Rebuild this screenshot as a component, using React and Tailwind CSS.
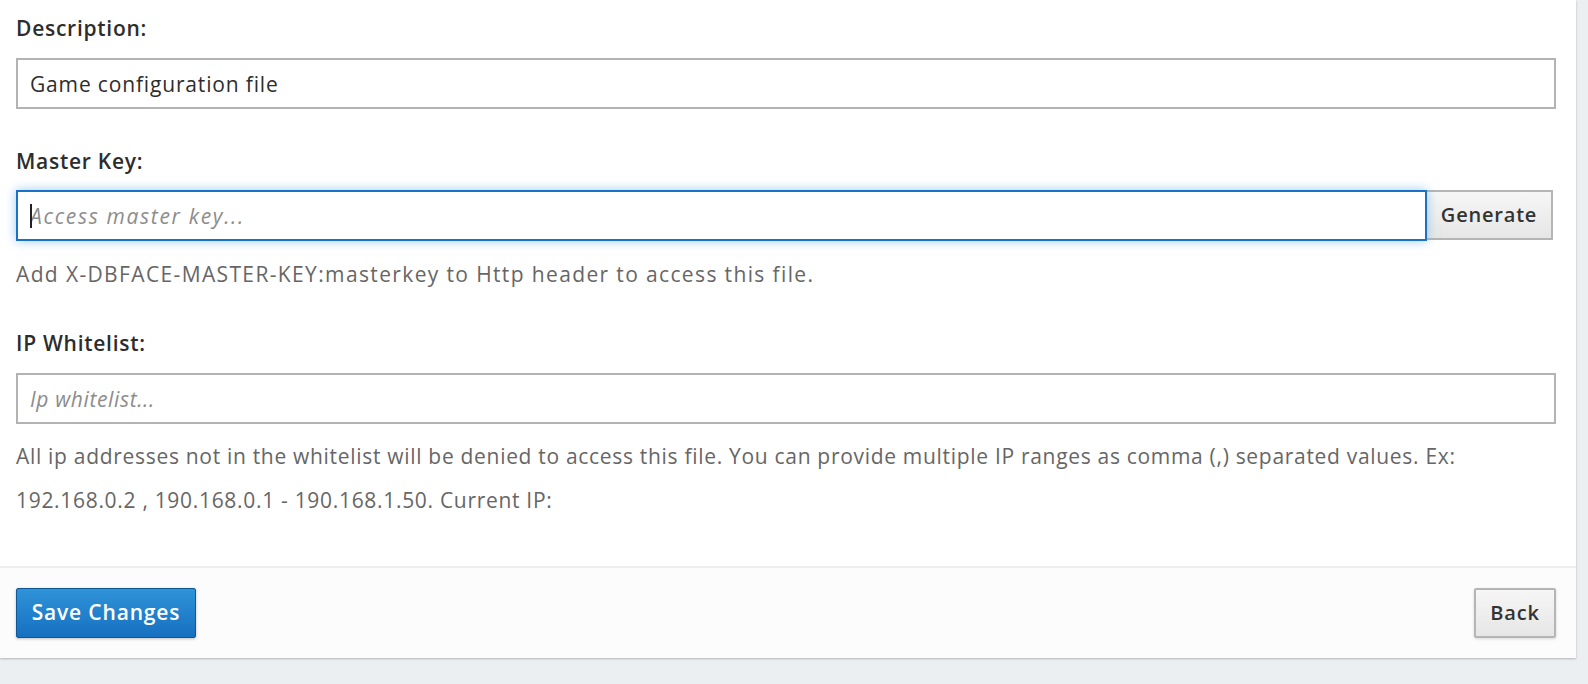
import React from "react";

const font = { fontFamily: '"Open Sans", "Noto Sans", sans-serif' };

const Label = ({ children, className = "" }) => (
  <label className={`block text-[21px] tracking-[0.035em] leading-[24px] font-semibold text-[#2d2d2d] ${className}`}>
    {children}
  </label>
);

export default function App() {
  return (
    <div className="w-[1588px] h-[684px] bg-[#eceff2] flex items-start overflow-hidden" style={font}>
      <div className="w-[1576px] bg-white shadow-[0_1px_2px_rgba(0,0,0,0.25)]">
        {/* form body */}
        <div className="pt-[16px] pl-[16px] pr-[20px] pb-[44px]">
          <Label className="mb-[18px]">Description:</Label>
          <input
            type="text"
            defaultValue="Game configuration file"
            className="w-full h-[51px] border-2 border-[#b3b3b3] px-[12px] text-[21px] tracking-[0.04em] text-[#2d2d2d] outline-none"
          />

          <Label className="mt-[40px] mb-[17px]">Master Key:</Label>
          <div className="flex">
            <div className="relative flex-1">
              <input
                type="text"
                placeholder="Access master key..."
                className="w-full h-[51px] border-2 border-[#1a72c6] px-[12px] text-[21px] tracking-[0.08em] italic text-[#2d2d2d] placeholder:text-[#8c8c8c] outline-none shadow-[0_0_10px_rgba(82,160,226,0.55)]"
              />
              {/* text caret */}
              <span className="absolute left-[14px] top-[14px] w-[2px] h-[24px] bg-[#222]" />
            </div>
            <button className="w-[126px] h-[50px] mr-[3px] border-2 border-l-0 border-[#b5b5b5] bg-gradient-to-b from-[#f6f6f6] to-[#e6e6e6] text-[20px] tracking-[0.04em] font-semibold text-[#333]">
              Generate
            </button>
          </div>
          <p className="mt-[21px] text-[21px] tracking-[0.065em] leading-[24px] text-[#666]">
            Add X-DBFACE-MASTER-KEY:masterkey to Http header to access this file.
          </p>

          <Label className="mt-[45px] mb-[18px]">IP Whitelist:</Label>
          <input
            type="text"
            placeholder="Ip whitelist..."
            className="w-full h-[51px] border-2 border-[#b3b3b3] px-[12px] text-[21px] tracking-[0.03em] italic text-[#2d2d2d] placeholder:text-[#8c8c8c] outline-none"
          />
          <p className="mt-[10px] text-[21px] tracking-[0.033em] leading-[44px] text-[#666]">
            All ip addresses not in the whitelist will be denied to access this file. You can provide multiple IP ranges as comma (,) separated values. Ex: 192.168.0.2 , 190.168.0.1 - 190.168.1.50. Current IP:
          </p>
        </div>

        {/* footer */}
        <div className="border-t-2 border-[#efefef] bg-[#fcfcfc] px-[16px] pr-[20px] py-[20px] flex justify-between">
          <button className="h-[50px] w-[180px] rounded-[2px] border border-[#0f5796] bg-gradient-to-b from-[#2f93d8] to-[#1670c0] text-white text-[21px] tracking-[0.04em] font-semibold shadow-[0_1px_3px_rgba(0,0,0,0.25)]">
            Save Changes
          </button>
          <button className="h-[50px] w-[82px] rounded-[2px] border-2 border-[#b5b5b5] bg-gradient-to-b from-[#f6f6f6] to-[#e6e6e6] text-[20px] tracking-[0.04em] font-semibold text-[#333] shadow-[0_1px_3px_rgba(0,0,0,0.15)]">
            Back
          </button>
        </div>
      </div>
    </div>
  );
}
